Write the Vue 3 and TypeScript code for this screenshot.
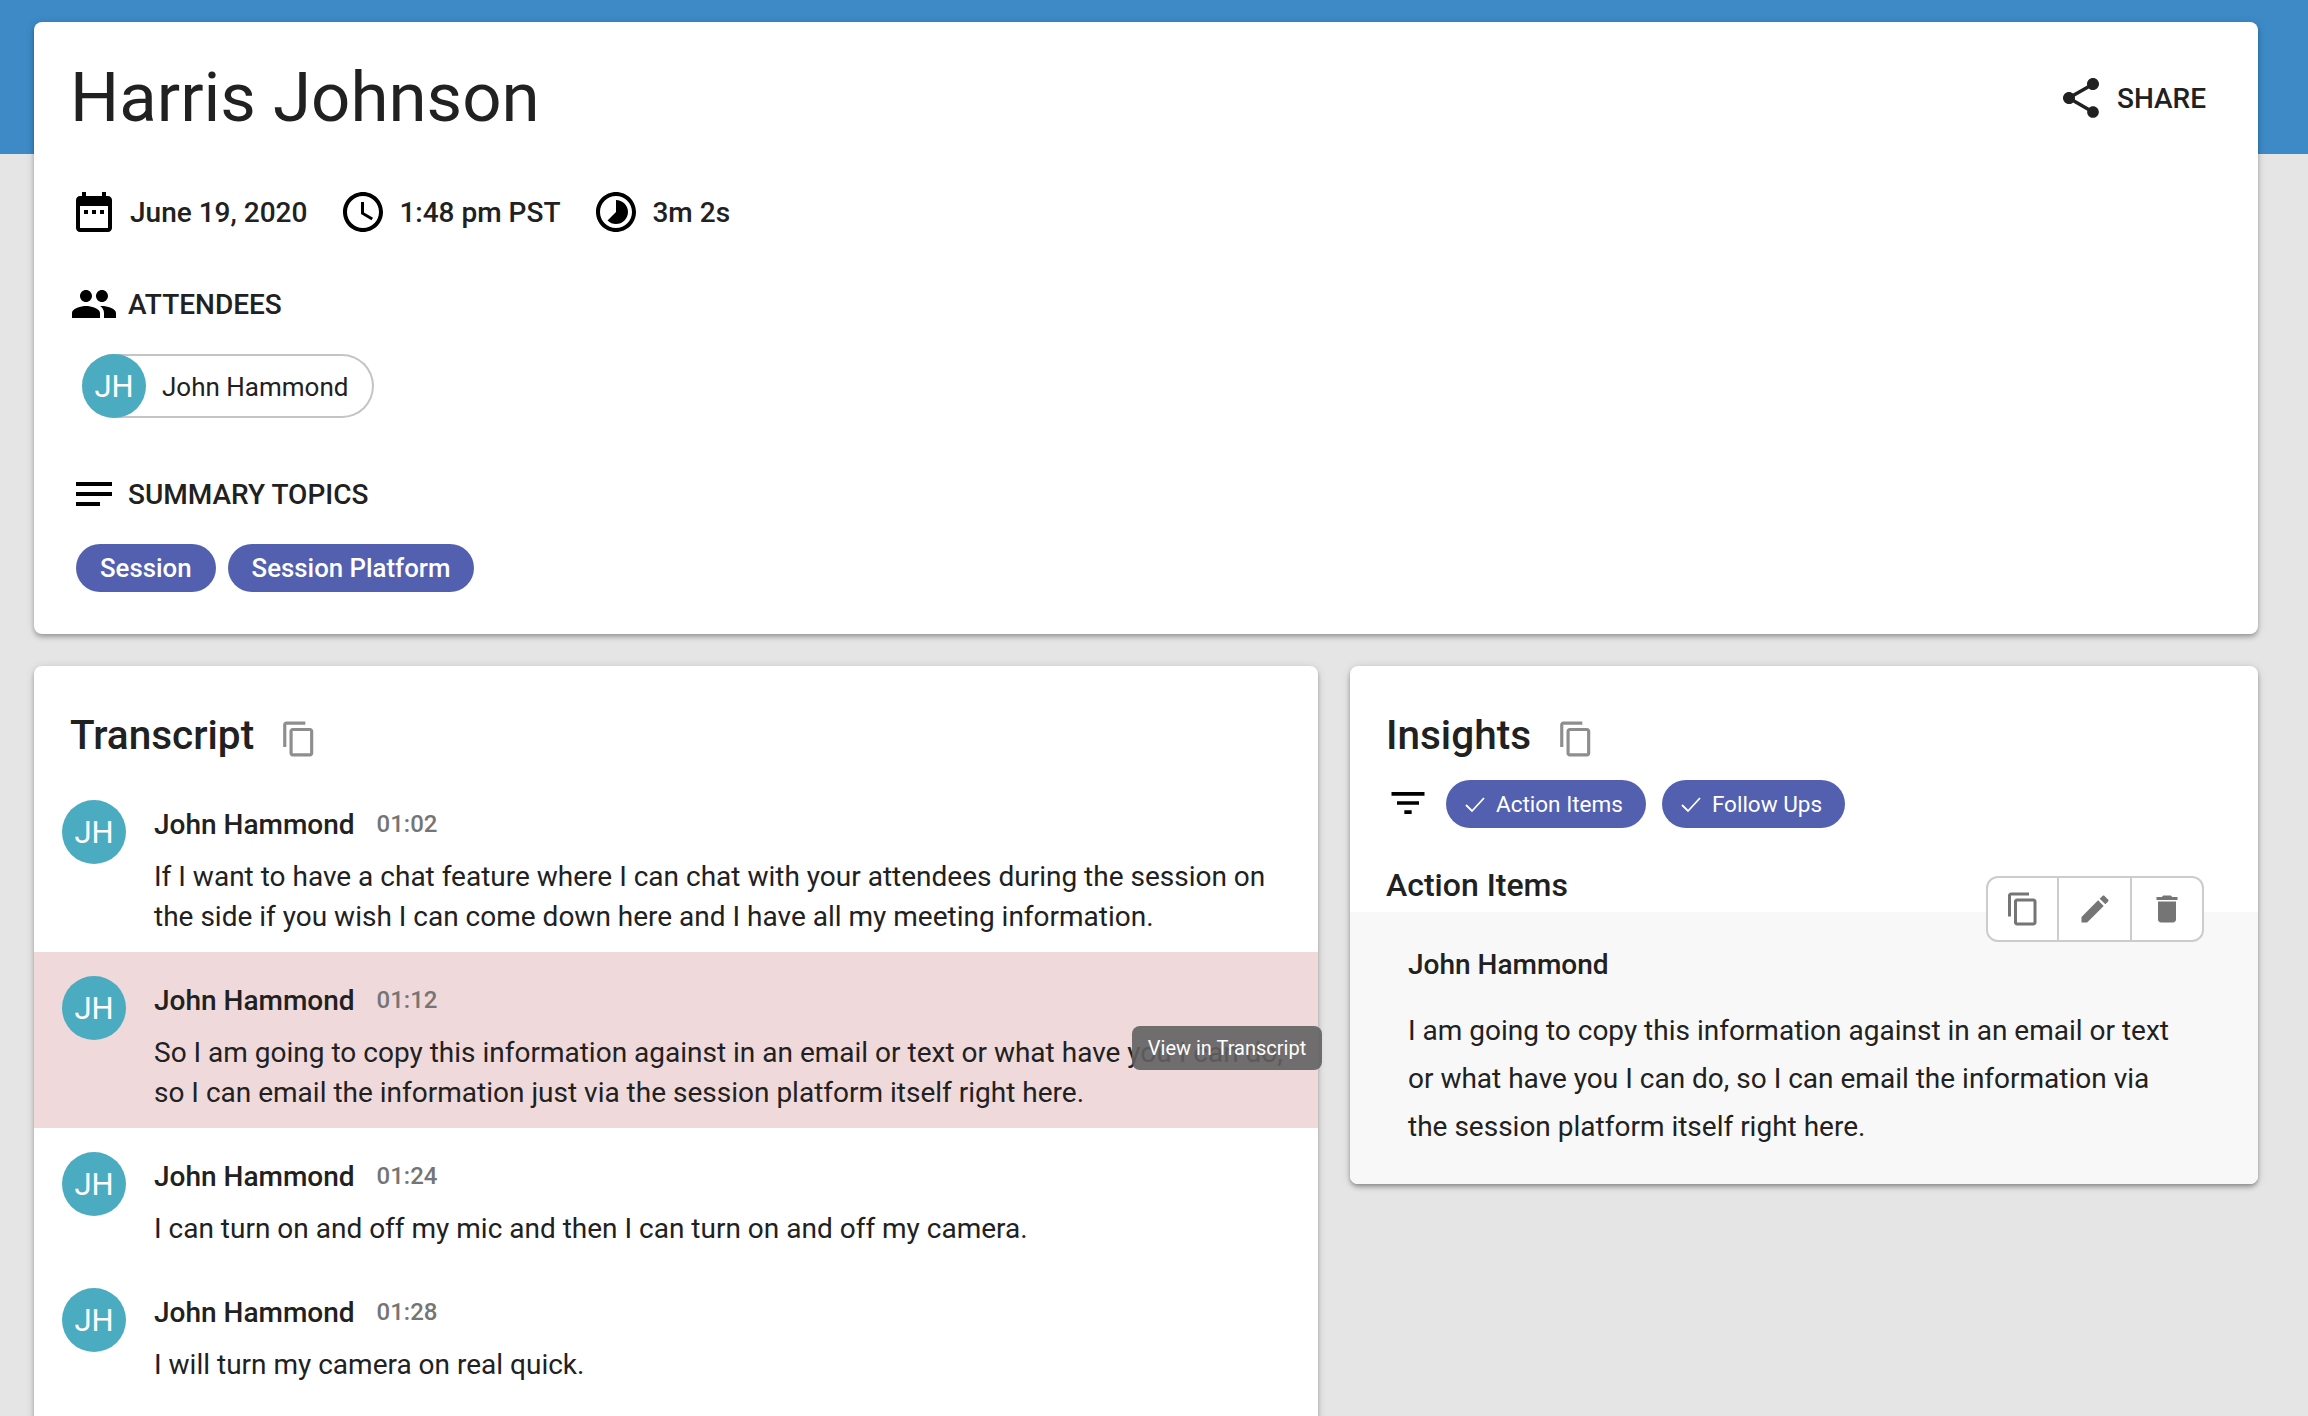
<script setup lang="ts">
const initials = 'JH'
const rows = [
  { time: '01:02', text: 'If I want to have a chat feature where I can chat with your attendees during the session on the side if you wish I can come down here and I have all my meeting information.', active: false },
  { time: '01:12', text: 'So I am going to copy this information against in an email or text or what have you I can do, so I can email the information just via the session platform itself right here.', active: true },
  { time: '01:24', text: 'I can turn on and off my mic and then I can turn on and off my camera.', active: false },
  { time: '01:28', text: 'I will turn my camera on real quick.', active: false },
]
const copyPath = 'M16 1H4c-1.1 0-2 .9-2 2v14h2V3h12V1zm3 4H8c-1.1 0-2 .9-2 2v14c0 1.1.9 2 2 2h11c1.1 0 2-.9 2-2V7c0-1.1-.9-2-2-2zm0 16H8V7h11v14z'
</script>

<template>
  <div class="page">
    <section class="card header">
      <div class="title-row">
        <h1>Harris Johnson</h1>
        <div class="share">
          <svg class="i48" viewBox="0 0 24 24"><path fill="#212121" d="M18 16.08c-.76 0-1.44.3-1.96.77L8.91 12.7c.05-.23.09-.46.09-.7s-.04-.47-.09-.7l7.05-4.11c.54.5 1.25.81 2.04.81 1.66 0 3-1.34 3-3s-1.34-3-3-3-3 1.34-3 3c0 .24.04.47.09.7L8.04 9.81C7.5 9.31 6.79 9 6 9c-1.66 0-3 1.34-3 3s1.34 3 3 3c.79 0 1.5-.31 2.04-.81l7.12 4.16c-.05.21-.08.43-.08.65 0 1.61 1.31 2.92 2.92 2.92 1.61 0 2.92-1.31 2.92-2.92s-1.31-2.92-2.92-2.92z"/></svg>
          <span>SHARE</span>
        </div>
      </div>

      <div class="meta">
        <div class="meta-item">
          <svg class="i48" viewBox="0 0 24 24"><path d="M9 11H7v2h2v-2zm4 0h-2v2h2v-2zm4 0h-2v2h2v-2zm2-7h-1V2h-2v2H8V2H6v2H5c-1.11 0-1.99.9-1.99 2L3 20c0 1.1.89 2 2 2h14c1.1 0 2-.9 2-2V6c0-1.1-.9-2-2-2zm0 16H5V9h14v11z"/></svg>
          <span>June 19, 2020</span>
        </div>
        <div class="meta-item">
          <svg class="i48" viewBox="0 0 24 24"><path d="M11.99 2C6.47 2 2 6.48 2 12s4.47 10 9.99 10C17.52 22 22 17.52 22 12S17.52 2 11.99 2zM12 20c-4.42 0-8-3.58-8-8s3.58-8 8-8 8 3.58 8 8-3.58 8-8 8zm.5-13H11v6l5.25 3.15.75-1.23-4.5-2.67z"/></svg>
          <span>1:48 pm PST</span>
        </div>
        <div class="meta-item">
          <svg class="i48" viewBox="0 0 24 24"><path d="M16.24 7.76C15.07 6.59 13.54 6 12 6v6l-4.24 4.24c2.34 2.34 6.14 2.34 8.49 0 2.34-2.34 2.34-6.14-.01-8.48zM12 2C6.48 2 2 6.48 2 12s4.48 10 10 10 10-4.48 10-10S17.52 2 12 2zm0 18c-4.42 0-8-3.58-8-8s3.58-8 8-8 8 3.58 8 8-3.58 8-8 8z"/></svg>
          <span>3m 2s</span>
        </div>
      </div>

      <div class="label attendees">
        <svg class="i48" viewBox="0 0 24 24"><path d="M16 11c1.66 0 2.99-1.34 2.99-3S17.66 5 16 5c-1.66 0-3 1.34-3 3s1.34 3 3 3zm-8 0c1.66 0 2.99-1.34 2.99-3S9.66 5 8 5C6.34 5 5 6.34 5 8s1.34 3 3 3zm0 2c-2.33 0-7 1.17-7 3.5V19h14v-2.5c0-2.33-4.67-3.5-7-3.5zm8 0c-.29 0-.62.02-.97.05 1.16.84 1.97 1.97 1.97 3.45V19h6v-2.5c0-2.33-4.67-3.5-7-3.5z"/></svg>
        <span>ATTENDEES</span>
      </div>
      <div class="attendee">
        <span class="avatar">{{ initials }}</span>
        <span class="attendee-name">John Hammond</span>
      </div>

      <div class="label summary">
        <svg class="i48" viewBox="0 0 24 24"><path d="M3 18h12v-2H3v2zM3 6v2h18V6H3zm0 7h18v-2H3v2z"/></svg>
        <span>SUMMARY TOPICS</span>
      </div>
      <div class="topics">
        <span class="topic">Session</span>
        <span class="topic">Session Platform</span>
      </div>
    </section>

    <div class="columns">
      <section class="card transcript">
        <div class="section-head">
          <h2>Transcript</h2>
          <svg class="copy" viewBox="0 0 24 24"><path fill="#8e8e8e" :d="copyPath"/></svg>
        </div>
        <div v-for="row in rows" :key="row.time" class="row" :class="{ active: row.active }">
          <span class="avatar">{{ initials }}</span>
          <div class="row-body">
            <div class="row-head">
              <span class="name">John Hammond</span>
              <span class="time">{{ row.time }}</span>
            </div>
            <p>{{ row.text }}</p>
          </div>
          <div v-if="row.active" class="tooltip">View in Transcript</div>
        </div>
      </section>

      <section class="card insights">
        <div class="section-head">
          <h2>Insights</h2>
          <svg class="copy" viewBox="0 0 24 24"><path fill="#8e8e8e" :d="copyPath"/></svg>
        </div>
        <div class="filters">
          <svg class="filter-icon" viewBox="0 0 24 24"><path d="M10 18h4v-2h-4v2zM3 6v2h18V6H3zm3 7h12v-2H6v2z"/></svg>
          <span class="filter-chip">
            <svg viewBox="0 0 24 24"><path d="M3 13l6 6L21 6" fill="none" stroke="#fff" stroke-width="1.8"/></svg>
            Action Items
          </span>
          <span class="filter-chip">
            <svg viewBox="0 0 24 24"><path d="M3 13l6 6L21 6" fill="none" stroke="#fff" stroke-width="1.8"/></svg>
            Follow Ups
          </span>
        </div>
        <h3>Action Items</h3>
        <div class="panel">
          <div class="name panel-name">John Hammond</div>
          <p>I am going to copy this information against in an email or text or what have you I can do, so I can email the information via the session platform itself right here.</p>
        </div>
        <div class="toolbar">
          <button class="tool-copy"><svg viewBox="0 0 24 24"><path fill="#757575" :d="copyPath"/></svg></button>
          <button class="tool-edit"><svg viewBox="0 0 24 24"><path fill="#757575" d="M3 17.25V21h3.75L17.81 9.94l-3.75-3.75L3 17.25zM20.71 7.04c.39-.39.39-1.02 0-1.41l-2.34-2.34c-.39-.39-1.02-.39-1.41 0l-1.83 1.83 3.75 3.75 1.83-1.83z"/></svg></button>
          <button class="tool-delete"><svg viewBox="0 0 24 24"><path fill="#757575" d="M6 19c0 1.1.9 2 2 2h8c1.1 0 2-.9 2-2V7H6v12zM19 4h-3.5l-1-1h-5l-1 1H5v2h14V4z"/></svg></button>
        </div>
      </section>
    </div>
  </div>
</template>

<style scoped>
.page {
  box-sizing: border-box;
  width: 2308px;
  height: 1416px;
  overflow: hidden;
  padding: 22px 50px 0 34px;
  display: flex;
  flex-direction: column;
  gap: 32px;
  background: linear-gradient(#3d8ac6 154px, #e5e5e5 154px);
  font-family: Roboto, sans-serif;
  color: #212121;
}
.card {
  background: #fff;
  border-radius: 8px;
  box-shadow: 0 2px 4px -1px rgba(0,0,0,.2), 0 4px 5px rgba(0,0,0,.14), 0 1px 10px rgba(0,0,0,.12);
}
.header {
  padding: 28px 36px 42px;
  flex: none;
}
.title-row {
  height: 96px;
  display: flex;
  align-items: center;
  justify-content: space-between;
}
h1 {
  margin: 0;
  font-size: 69px;
  font-weight: 400;
  line-height: 96px;
}
.i48 { width: 48px; height: 48px; flex: none; display: block; }
.share {
  display: flex;
  align-items: center;
  gap: 12px;
  font-size: 28px;
  font-weight: 500;
  margin-right: 16px;
}
.meta {
  margin-top: 42px;
  display: flex;
  gap: 32px;
  height: 48px;
}
.meta-item {
  display: flex;
  align-items: center;
  gap: 12px;
  font-size: 28px;
  font-weight: 500;
}
.label {
  display: flex;
  align-items: center;
  gap: 10px;
  height: 48px;
  font-size: 28px;
  font-weight: 500;
}
.attendees { margin-top: 44px; }
.summary { margin-top: 52px; }
.avatar {
  width: 64px;
  height: 64px;
  flex: none;
  border-radius: 50%;
  background: #4babc0;
  color: #fff;
  font-size: 31px;
  display: flex;
  align-items: center;
  justify-content: center;
}
.attendee {
  margin: 26px 0 0 12px;
  width: 292px;
  box-sizing: border-box;
  height: 64px;
  display: flex;
  align-items: center;
  border: 2px solid #c4c4c4;
  border-left: none;
  border-radius: 32px;
  font-size: 26px;
}
.attendee-name { margin: 1px 0 0 16px; }
.topics {
  margin: 26px 0 0 6px;
  display: flex;
  gap: 12px;
}
.topic {
  height: 48px;
  padding: 0 24px;
  border-radius: 24px;
  background: #5360b0;
  color: #fff;
  font-size: 25.8px;
  font-weight: 500;
  display: flex;
  align-items: center;
}
.columns {
  display: grid;
  grid-template-columns: 1284px 908px;
  gap: 32px;
  align-items: start;
}
.section-head {
  display: flex;
  align-items: flex-start;
  padding-left: 36px;
  height: 110px;
}
h2 {
  margin: 41px 0 0;
  font-size: 40.5px;
  font-weight: 500;
  line-height: 56px;
}
.copy {
  width: 38px;
  height: 38px;
  margin: 54px 0 0 26px;
  flex: none;
}
.transcript { height: 900px; }
.row {
  position: relative;
  display: flex;
  gap: 28px;
  padding: 24px 24px 15px 28px;
}
.row.active { background: #efd9da; }
.row-head {
  height: 48px;
  display: flex;
  align-items: center;
  gap: 22px;
}
.name {
  font-size: 28px;
  font-weight: 500;
}
.time {
  font-size: 24px;
  font-weight: 500;
  color: #757575;
}
.row-body p {
  margin: 9px 0 0;
  font-size: 28px;
  line-height: 40px;
}
.tooltip {
  position: absolute;
  right: -4px;
  top: 74px;
  width: 190px;
  height: 44px;
  border-radius: 8px;
  background: rgba(97, 97, 97, .9);
  color: #fff;
  font-size: 20px;
  display: flex;
  align-items: center;
  justify-content: center;
}
.insights {
  position: relative;
  overflow: hidden;
  box-shadow: 0 2px 4px -1px rgba(0,0,0,.3), 0 4px 5px rgba(0,0,0,.14), 0 1px 10px rgba(0,0,0,.12);
}
.filters {
  margin-top: 4px;
  padding-left: 36px;
  display: flex;
  align-items: center;
  height: 48px;
}
.filter-icon {
  width: 44px;
  height: 44px;
  margin: -3px 16px 0 0;
}
.filter-chip {
  height: 48px;
  box-sizing: border-box;
  padding: 0 23px 0 17px;
  margin-right: 16px;
  border-radius: 24px;
  background: #5360b0;
  color: #fff;
  font-size: 22.5px;
  display: flex;
  align-items: center;
  gap: 9px;
}
.filter-chip svg { width: 24px; height: 24px; }
h3 {
  margin: 31px 0 0;
  padding-left: 36px;
  font-size: 32px;
  font-weight: 500;
  line-height: 52px;
  height: 53px;
}
.panel {
  background: #f8f8f8;
  padding: 29px 72px 33px 58px;
}
.panel-name { line-height: 48px; }
.panel p {
  margin: 18px 0 0;
  font-size: 28px;
  line-height: 48px;
}
.toolbar {
  position: absolute;
  top: 210px;
  right: 54px;
  width: 218px;
  height: 66px;
  box-sizing: border-box;
  display: flex;
  background: #fff;
  border: 2px solid #ccc;
  border-radius: 12px;
}
.toolbar button {
  padding: 0;
  border: none;
  background: transparent;
  display: flex;
  align-items: center;
  justify-content: center;
}
.tool-copy { width: 69px; }
.tool-edit { width: 73px; }
.tool-delete { flex: 1; }
.toolbar button + button { border-left: 2px solid #ccc; }
.toolbar svg { width: 36px; height: 36px; }
</style>
